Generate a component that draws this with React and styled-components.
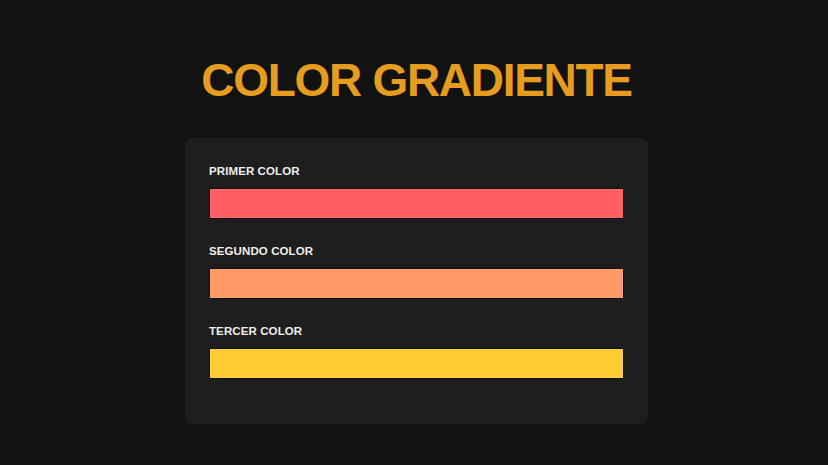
import React from "react";
import styled, { createGlobalStyle } from "styled-components";

const Global = createGlobalStyle`
  html, body { margin: 0; padding: 0; background: #121212; }
  body { font-family: "Liberation Sans", Arial, sans-serif; }
`;

const Page = styled.div`
  width: 828px;
  height: 465px;
  box-sizing: border-box;
  display: flex;
  flex-direction: column;
  align-items: center;
  padding: 55px 0 0 5px;
  background: #121212;
`;

const Title = styled.h1`
  margin: 0;
  font-family: "Liberation Sans", Arial, sans-serif;
  font-weight: 700;
  font-size: 46px;
  line-height: 50px;
  letter-spacing: -1.3px;
  color: #e59c1f;
`;

const Card = styled.div`
  margin-top: 33px;
  width: 463px;
  height: 286px;
  box-sizing: border-box;
  background: #1e1e1e;
  border-radius: 8px;
  padding: 26px 24px 0 24px;
  display: flex;
  flex-direction: column;
  gap: 25px;
`;

const Field = styled.div`
  display: flex;
  flex-direction: column;
  gap: 10px;
`;

const Label = styled.label`
  font-size: 11.5px;
  line-height: 14px;
  height: 14px;
  font-weight: 700;
  color: #eeeeee;
  letter-spacing: 0.1px;
`;

const Swatch = styled.div`
  width: 415px;
  height: 31px;
  box-sizing: border-box;
  border: 1px solid #0f0f0f;
  box-shadow: inset 0 0 0 1px rgba(255, 255, 255, 0.08);
  background: ${(p) => p.$color};
`;

const fields = [
  { label: "PRIMER COLOR", color: "#ff5e62" },
  { label: "SEGUNDO COLOR", color: "#ff9966" },
  { label: "TERCER COLOR", color: "#ffcc33" },
];

export default function App() {
  return (
    <>
      <Global />
      <Page>
        <Title>COLOR GRADIENTE</Title>
        <Card>
          {fields.map((f) => (
            <Field key={f.label}>
              <Label>{f.label}</Label>
              <Swatch $color={f.color} />
            </Field>
          ))}
        </Card>
      </Page>
    </>
  );
}
